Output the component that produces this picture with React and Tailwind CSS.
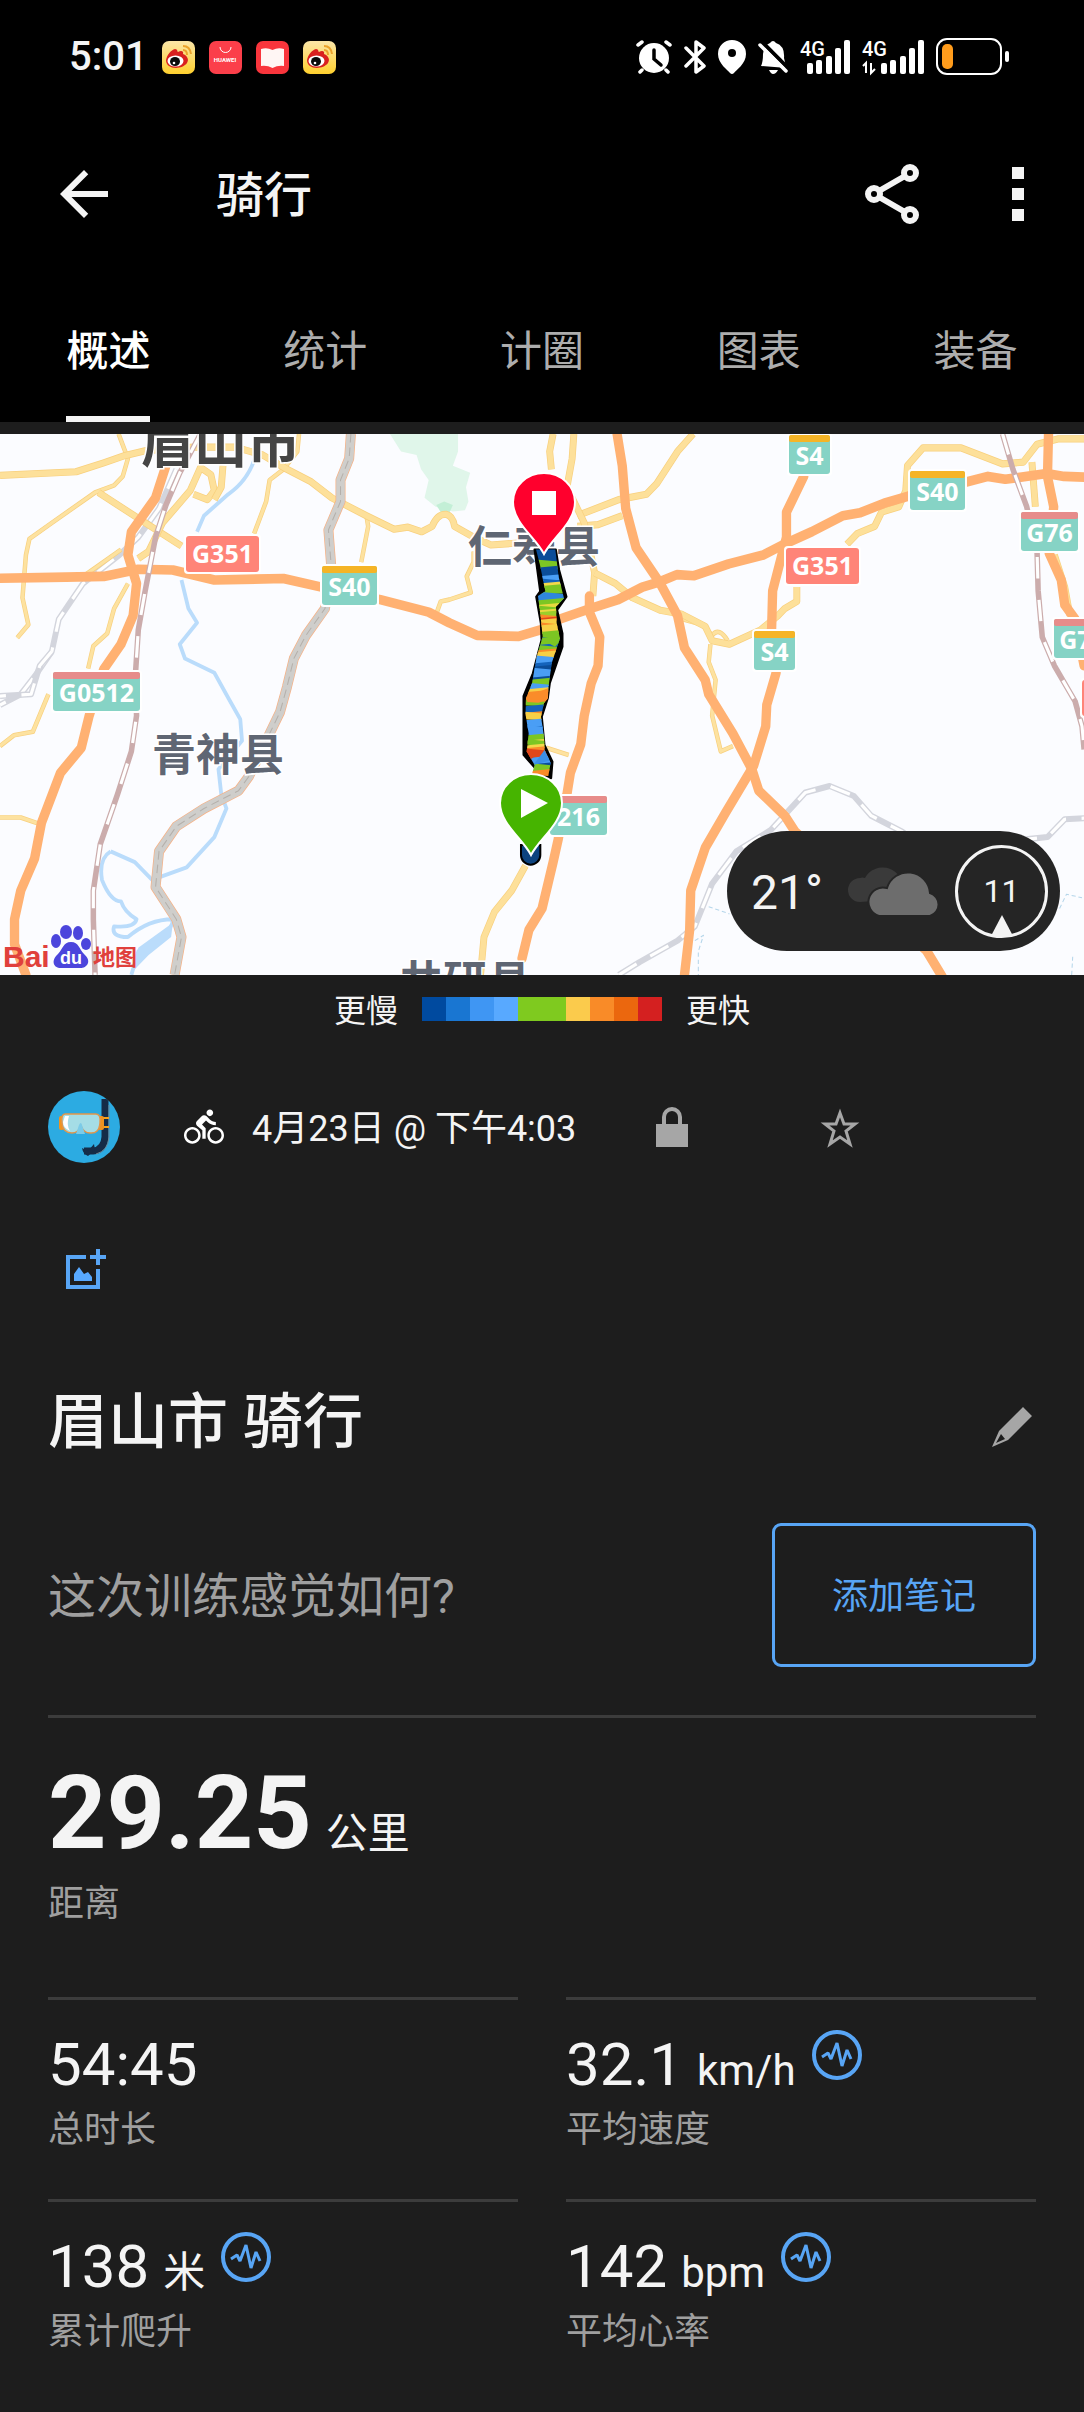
import { useState } from 'react';
import { MdDirectionsBike } from 'react-icons/md';

const tabs = ['概述', '统计', '计圈', '图表', '装备'];

const paceColors = [
  'bg-[#004a9f]',
  'bg-[#1976d2]',
  'bg-[#3f96f3]',
  'bg-[#58a9ff]',
  'bg-[#7fca1f]',
  'bg-[#7fca1f]',
  'bg-[#fbcb4c]',
  'bg-[#f98b28]',
  'bg-[#eb670e]',
  'bg-[#d42020]'
];

const stats = [
  { value: '54:45', unit: '', label: '总时长', chart: false },
  { value: '32.1', unit: 'km/h', label: '平均速度', chart: true },
  { value: '138', unit: '米', label: '累计爬升', chart: true },
  { value: '142', unit: 'bpm', label: '平均心率', chart: true }
];

const yellowRoads = [
  'M0 127L220 117L300 92L360 72L420 58L560 48L680 48L760 70L830 110L900 145L960 190L1060 240L1140 278L1180 272L1220 285L1250 270Q1265 235 1290 236Q1310 240 1315 270L1370 300L1420 322L1520 315',
  'M285 175L420 260L525 325',
  'M400 360L430 340L470 260L550 170L580 105L610 125L620 170L600 195L560 180',
  'M645 100L640 160L620 195',
  'M2005 11L1960 60L1900 150L1870 180L1790 195L1670 240',
  'M1670 270L1730 265L1800 240',
  'M1660 11L1655 80L1640 160L1690 260L1720 400L1715 465',
  'M1600 11L1590 60L1595 110',
  'M1720 400L1780 430L1830 470L1910 505L1970 515L2040 550L2060 590L2110 600L2200 560L2250 520L2270 500L2305 480L2305 440',
  'M2450 320L2480 290L2530 270L2550 230L2600 215L2620 170L2625 100L2670 50L2780 50L2900 95L2960 90L3000 40L3060 25L3136 25',
  'M2985 90L2995 215',
  'M3050 350L3080 440L3095 520',
  'M1520 1220L1480 1290L1430 1350L1400 1420L1390 1526'
];

const minorRoads = [
  'M343 11L370 80L355 130L330 155L275 175L150 260L85 305L75 350L65 470L82 545L50 582',
  'M865 11L860 60L820 110L780 140L770 200L735 290',
  'M1060 240L1065 270L1045 370',
  'M370 430L330 500L310 570L270 605L255 668',
  'M140 740L95 845L40 855L0 885',
  'M0 1085L60 1085L120 1105',
  'M1370 340L1370 370L1350 410L1362 455L1300 475L1275 480L1262 515',
  'M350 335L270 390L240 410',
  'M1975 530L2030 545L2060 575Q2080 550 2105 590',
  'M2055 600L2050 650L2070 700L2060 800L2085 900L2120 885',
  'M1580 890L1645 910'
];

const mainRoads = [
  'M0 415L190 412L300 410L400 390L500 392L620 420L820 416L930 440L1100 475L1240 510L1300 540L1380 575L1500 578L1568 558L1618 530L1708 500L1788 475L1858 440L1908 425L1958 405L2008 408L2108 375L2208 350L2268 320L2348 285L2438 240L2488 232L2558 205L2628 185L2798 145L2858 130L2908 138L3028 122L3078 130L3136 132',
  'M480 100L450 190L380 285L370 350L395 430L385 520L350 600L300 670L258 800L235 890L175 960L120 1100L100 1200L60 1290L42 1370L42 1440L75 1526',
  'M1785 11L1800 100L1810 220L1840 330L1910 430L1960 520L1980 610L2040 700L2050 740L2120 850L2175 950L2195 1010L2270 1080L2300 1125L2680 1458L2725 1530',
  'M2325 130L2275 230L2275 300L2235 450L2232 560L2245 680L2218 770L2215 830L2180 940L2100 1070L2040 1170L1998 1290L1995 1400L1980 1526',
  'M1705 465L1705 510L1735 580L1730 660L1710 710L1690 800L1680 880L1650 960L1640 1020L1615 1145L1600 1210L1568 1340L1530 1400L1510 1480',
  'M3033 11L3030 130L3048 215L3035 345L3070 420L3080 490L3110 530L3136 660'
];

const expressway =
  'M1015 11L1010 80L985 140L985 200L950 280L958 380L940 500L885 575L850 640L830 720L810 790L780 850L720 970L690 1010L590 1060L510 1110L460 1180L450 1280L510 1370L525 1420L505 1526';

const railways = [
  'M580 11L520 120L480 210L450 300L420 450L400 560L392 680L395 800L380 900L340 1020L290 1160L270 1290L270 1370L275 1526',
  'M2900 11L2930 110L2970 215L3000 345L3003 450L3015 580L3050 660L3110 760L3130 830L3136 895'
];

const plannedRailways = [
  'M510 110L460 220L400 300L345 350L240 430L170 530L150 620L100 690L60 740L0 770',
  'M150 620L115 660L90 740L0 745',
  'M1790 1526L1850 1490L1960 1430L2010 1390L2060 1270L2130 1180L2230 1120L2330 1015L2400 997L2470 1025L2520 1080L2610 1125L2700 1190',
  'M2940 1150L2980 1145L3030 1140L3080 1090L3136 1087'
];

const rivers = [
  'M740 70Q720 140 660 180L590 240L570 285',
  'M525 420L545 500L570 540L520 600L535 640L620 680L660 750L695 810L700 870L632 950L640 1020L655 1060L620 1140L540 1225L440 1260L390 1210L320 1180',
  'M320 1180Q285 1200 295 1260Q320 1320 350 1320Q360 1350 395 1370Q390 1395 330 1390Q320 1420 370 1420Q430 1370 500 1370Q500 1410 400 1460L380 1526'
];

// [start, end, colour] down the route
const routeBands = [
  [290, 332, '#0b4d99'],
  [332, 352, '#7cc623'],
  [352, 378, '#0b4d99'],
  [378, 388, '#4a9ef5'],
  [388, 400, '#1463bb'],
  [400, 408, '#f3d84a'],
  [408, 428, '#7cc623'],
  [428, 450, '#2f86dd'],
  [450, 464, '#7cc623'],
  [464, 470, '#e9d83f'],
  [470, 480, '#7cc623'],
  [480, 486, '#e9d83f'],
  [486, 496, '#9bcf2b'],
  [496, 504, '#f98b28'],
  [504, 509, '#e0471b'],
  [509, 520, '#f6cf46'],
  [520, 526, '#f98b28'],
  [526, 546, '#f6cf46'],
  [546, 564, '#7cc623'],
  [564, 568, '#1463bb'],
  [568, 584, '#7cc623'],
  [584, 588, '#1463bb'],
  [588, 600, '#7cc623'],
  [600, 606, '#f98b28'],
  [606, 620, '#f6cf46'],
  [620, 638, '#4a9ef5'],
  [638, 648, '#1463bb'],
  [648, 658, '#0b4d99'],
  [658, 680, '#4a9ef5'],
  [680, 686, '#0b4d99'],
  [686, 704, '#7cc623'],
  [704, 714, '#4a9ef5'],
  [714, 722, '#f6cf46'],
  [722, 756, '#fa8c2a'],
  [756, 764, '#7cc623'],
  [764, 784, '#1463bb'],
  [784, 792, '#f98b28'],
  [792, 806, '#f6cf46'],
  [806, 828, '#4a9ef5'],
  [828, 832, '#1463bb'],
  [832, 852, '#4a9ef5'],
  [852, 868, '#7cc623'],
  [868, 874, '#f3d84a'],
  [874, 882, '#7cc623'],
  [882, 890, '#f3d84a'],
  [890, 902, '#fa8c2a'],
  [902, 920, '#e0471b'],
  [920, 940, '#4a9ef5'],
  [940, 945, '#0b4d99'],
  [945, 960, '#7cc623'],
  [960, 990, '#f98b28']
];

const shields = [
  { x: 186, y: 102, w: 73, text: 'G351', kind: 'national' },
  { x: 322, y: 132, w: 55, text: 'S40', kind: 'provincial' },
  { x: 53, y: 238, w: 87, text: 'G0512', kind: 'express' },
  { x: 789, y: 1, w: 41, text: 'S4', kind: 'provincial' },
  { x: 910, y: 37, w: 55, text: 'S40', kind: 'provincial' },
  { x: 1021, y: 78, w: 57, text: 'G76', kind: 'express' },
  { x: 786, y: 114, w: 73, text: 'G351', kind: 'national' },
  { x: 754, y: 197, w: 41, text: 'S4', kind: 'provincial' },
  { x: 1054, y: 185, w: 57, text: 'G76', kind: 'express' },
  { x: 1082, y: 246, w: 73, text: '', kind: 'national' },
  { x: 550, y: 362, w: 57, text: '216', kind: 'express' }
];

const Shield = ({ x, y, w, text, kind }) => {
  const national = kind === 'national';
  const h = national ? 36 : 39;
  return (
    <g>
      <rect x={x - 2} y={y - 2} width={w + 4} height={h + 4} rx="4" fill="#fff" />
      <rect x={x} y={y} width={w} height={h} rx="3" fill={national ? '#ff8478' : '#86d3c5'} />
      {!national && (
        <rect x={x} y={y} width={w} height="7" rx="2" fill={kind === 'provincial' ? '#f5b426' : '#e78c8a'} />
      )}
      <text
        x={x + w / 2}
        y={national ? y + 27 : y + 30}
        textAnchor="middle"
        className="fill-white font-['Noto_Sans',sans-serif] text-[25px] font-bold"
      >
        {text}
      </text>
    </g>
  );
};

const Pin = ({ x, y, color, children }) => (
  <g transform={`translate(${x} ${y})`}>
    <path
      d="M0 81C-8 65 -31 50 -31 29A31 29 0 0 1 31 29C31 50 8 65 0 81Z"
      fill={color}
      stroke="#fff"
      strokeWidth="2"
    />
    {children}
  </g>
);

const RouteMap = () => (
  <svg
    viewBox="0 0 1084 541"
    preserveAspectRatio="xMidYMid slice"
    className="block h-[541px] w-full bg-[#fbfcff] font-['Noto_Sans_CJK_SC',sans-serif]"
    role="img"
    aria-label="路线地图"
  >
    <defs>
      <clipPath id="route">
        <path d="M288 298L300 345L316 424L294 438L302 500L308 560L290 620L276 700L258 745L256 790L266 850L260 905L284 945L275 975L325 978L332 938L314 900L312 860L303 800L312 760L324 745L325 715L335 640L360 565L350 520L348 470L372 445L356 380L346 298Z" />
      </clipPath>
    </defs>
    <g transform="translate(0 -4) scale(.3457 .3571)" fill="none" strokeLinejoin="round">
      <path d="M1128 11L1160 60L1205 70L1218 110L1240 140L1228 190L1260 215L1310 228L1345 225L1355 200L1348 160L1360 120L1310 100L1325 60V11Z" fill="#e0f6ea" />
      <path d="M1262 210L1285 200L1310 210L1300 232L1275 230Z" fill="#c3efd6" />
      {rivers.map((d) => (
        <path key={d} d={d} stroke="#badcfb" strokeWidth="11" />
      ))}
      <path d="M500 1380L400 1450L390 1510L430 1470L495 1420Z" fill="#badcfb" />
      <path d="M2050 1335L2110 1355M2010 1430L2035 1415L2020 1460L2020 1526M3100 1526L3103 1475M3065 1340L3085 1300L3130 1310" stroke="#b5d6ea" strokeWidth="3" strokeDasharray="12 8" />
      {plannedRailways.map((d) => (
        <g key={d}>
          <path d={d} stroke="#d3d5dd" strokeWidth="17" />
          <path d={d} stroke="#fff" strokeWidth="9" strokeDasharray="60 45" />
        </g>
      ))}
      {minorRoads.map((d) => (
        <g key={d}>
          <path d={d} stroke="#f8d07e" strokeWidth="13" />
          <path d={d} stroke="#fde2a0" strokeWidth="9" />
        </g>
      ))}
      {yellowRoads.map((d) => (
        <g key={d}>
          <path d={d} stroke="#f8d07e" strokeWidth="20" />
          <path d={d} stroke="#fde09a" strokeWidth="16" />
        </g>
      ))}
      {mainRoads.map((d) => (
        <path key={d} d={d} stroke="#ffb172" strokeWidth="27" strokeLinecap="round" />
      ))}
      {railways.map((d) => (
        <g key={d}>
          <path d={d} stroke="#cbacac" strokeWidth="16" />
          <path d={d} stroke="#fff" strokeWidth="9" strokeDasharray="60 60" />
        </g>
      ))}
      <path d={expressway} stroke="#f8b184" strokeWidth="29" />
      <path d={expressway} stroke="#cfcecb" strokeWidth="25" />
      <path d={expressway} stroke="#b5b0ab" strokeWidth="3" strokeDasharray="24 14" />
    </g>

    <g fill="#5f6673" stroke="#fff" strokeWidth="3" paintOrder="stroke" className="text-[44px] font-bold">
      <text x="141" y="29" fill="#454545" className="text-[53px]">眉山市</text>
      <text x="152" y="337">青神县</text>
      <text x="468" y="129">仁寿县</text>
      <text x="399" y="564">井研县</text>
    </g>

    {shields.map((s) => (
      <Shield key={`${s.x}-${s.y}`} {...s} />
    ))}

    {/* Route */}
    <g transform="translate(440 16) scale(.3333)">
      <path
        d="M283 298L300 424L288 440L302 520L304 570L278 670L250 738V915L285 955L280 985H334L338 935L314 885L306 800L324 745L330 700L368 590V550L352 480L380 440L358 360L348 298Z"
        stroke="#000"
        strokeWidth="5"
        strokeLinejoin="round"
      />
      <g clipPath="url(#route)">
        {routeBands.map(([from, to, color], i) => (
          <path
            key={from}
            d={i % 3 === 1
              ? `M240 ${from - 8}L390 ${from + 6}V${to + 8}L240 ${to + 2}Z`
              : `M240 ${from + 6}L390 ${from - 8}V${to + 2}L240 ${to + 8}Z`}
            fill={color}
          />
        ))}
        <path d="M300 565L345 562L362 572L345 590Z" fill="#7cc623" />
        <path d="M258 740L324 715L322 750L295 758L262 756Z" fill="#fa8c2a" />
        <path d="M258 895L300 905L270 930Z" fill="#e0471b" />
        <path d="M280 945L318 895L336 930Z" fill="#3b8fe6" />
      </g>
      <path d="M243 1185V1215A29 29 0 0 0 301 1215V1185Z" fill="#0d437f" stroke="#000" strokeWidth="6" />
    </g>

    <Pin x={544} y={39} color="#ff002d">
      <rect x="-12" y="18" width="24" height="24" fill="#fff" />
    </Pin>
    <Pin x={531} y={340} color="#46b400">
      <path d="M-10 15V44L17 29Z" fill="#fff" />
    </Pin>

    {/* Map provider logo */}
    <g fill="#e0403c" className="font-bold">
      <text x="3" y="533" className="font-['Liberation_Sans',sans-serif] text-[30px]">Bai</text>
      <text x="93" y="531" className="text-[22px]">地图</text>
      <g fill="#4b45dc">
        <ellipse cx="56" cy="507" rx="5" ry="7" />
        <ellipse cx="66" cy="498" rx="6" ry="7" />
        <ellipse cx="78" cy="499" rx="5" ry="7" />
        <ellipse cx="86" cy="510" rx="5" ry="6" />
        <path d="M71 508C79 508 79 515 84 520C93 528 86 535 79 534H62C54 535 50 527 58 520C63 515 63 508 71 508Z" />
      </g>
      <text x="60" y="530" fill="#fff" className="font-['Liberation_Sans',sans-serif] text-[18px]">du</text>
    </g>
  </svg>
);

const WeatherBadge = () => (
  <div className="absolute right-6 bottom-6 flex h-[120px] items-center rounded-full bg-[#252525] pr-3 pl-6 text-[#f4f4f4]">
    <span className="w-24 pt-1 text-5xl">21°</span>
    <svg viewBox="0 0 96 50" className="h-[50px] w-[96px]">
      <path d="M13 36A12 12 0 0 1 13 12Q15 11 18 12A20 20 0 0 1 52 10L40 34Z" fill="#3a3a3a" />
      <path d="M32 50A14 14 0 1 1 40 22A22 22 0 0 1 83 27A12 12 0 0 1 83 50Z" fill="#6d6d6d" stroke="#252525" strokeWidth="2" />
    </svg>
    <div className="relative ml-3 flex size-[93px] items-center justify-center rounded-full border-[3px] border-[#f4f4f4] text-[32px]">
      11
      <svg viewBox="0 0 22 22" className="absolute -bottom-[2px] size-[22px]">
        <path d="M11 0L22 21Q11 23 0 21Z" fill="#f4f4f4" />
      </svg>
    </div>
  </div>
);

const WeiboIcon = () => (
  <svg viewBox="0 0 33 33" className="size-[33px]">
    <defs>
      <linearGradient id="weibo" x2="0" y2="1">
        <stop stopColor="#fbe6a8" />
        <stop offset="1" stopColor="#ffd02e" />
      </linearGradient>
    </defs>
    <rect width="33" height="33" rx="7" fill="url(#weibo)" />
    <path d="M4 19C5 14 9 9 13 8C16 8 15 11 16 11C19 9 22 10 21 13C26 15 27 19 25 22C20 29 4 29 4 19Z" fill="#d9201f" />
    <ellipse cx="13.5" cy="20" rx="8" ry="5.5" fill="#fff" />
    <ellipse cx="13" cy="20.5" rx="5" ry="4.5" fill="#0a0a0a" />
    <circle cx="12" cy="22" r="1.3" fill="#fff" />
    <path d="M21 5Q28 5 29 13M21 9Q25 9 25 14" fill="none" stroke="#eba22c" strokeWidth="2" />
  </svg>
);

const StoreIcon = () => (
  <svg viewBox="0 0 33 33" className="size-[33px]">
    <rect width="33" height="33" rx="7" fill="#fb3f4a" />
    <path d="M11 6A5 5 0 0 0 22 6" fill="none" stroke="#fff" strokeWidth="1" />
    <text x="16" y="21" textAnchor="middle" fill="#fff" className="font-['Roboto',sans-serif] text-[6px] font-bold">HUAWEI</text>
  </svg>
);

const ReaderIcon = () => (
  <svg viewBox="0 0 33 33" className="size-[33px]">
    <rect width="33" height="33" rx="7" fill="#f9353c" />
    <path d="M5 8Q11 6 16.5 9Q22 6 28 8V25Q22 24 16.5 27Q11 24 5 25Z" fill="#fff6f4" />
  </svg>
);

const Signal = ({ data }) => (
  <svg
    viewBox={data ? '0 0 62 36' : '0 0 50 36'}
    className={data ? 'h-9 w-[62px] overflow-visible' : 'h-9 w-[50px] overflow-visible'}
    fill="#fff"
  >
    <text x="0" y="17" className="font-['Roboto',sans-serif] text-[20px] font-medium">4G</text>
    {data && (
      <path d="M1 27L4 24V34M9 24V34L13 30" fill="none" stroke="#fff" strokeWidth="2" />
    )}
    <g transform={data ? 'translate(12 0)' : undefined}>
      <rect x="7" y="24" width="6" height="11" rx="2" />
      <rect x="16" y="21" width="6" height="14" rx="2" />
      <rect x="26" y="17" width="6" height="18" rx="2" />
      <rect x="35" y="9" width="6" height="26" rx="2" />
      <rect x="44" y="1" width="6" height="34" rx="2" />
    </g>
  </svg>
);

const StatusBar = () => (
  <div className="flex h-[114px] items-center justify-between pr-[74px] pl-[69px]">
    <div className="flex items-center gap-[14px]">
      <span className="text-[40px] leading-none font-medium">5:01</span>
      <WeiboIcon />
      <StoreIcon />
      <ReaderIcon />
      <WeiboIcon />
    </div>
    <div className="flex items-center gap-3">
      <svg viewBox="0 0 36 34" className="h-[34px] w-9" fill="none" stroke="#fff" strokeLinecap="round">
        <circle cx="18" cy="18" r="15" fill="#fff" stroke="none" />
        <path d="M2 5L6 2M34 5L30 2M6 30L4 32M30 30L32 32" strokeWidth="3.5" />
        <path d="M18 10V19L25 25" stroke="#000" strokeWidth="3.5" />
      </svg>
      <svg viewBox="0 0 22 34" className="h-[34px] w-[22px]" fill="none" stroke="#fff" strokeWidth="3.5" strokeLinecap="round" strokeLinejoin="round">
        <path d="M2 8L20 26L12 32V2L20 8L2 26" />
      </svg>
      <svg viewBox="0 0 28 34" className="h-[34px] w-7">
        <path d="M14 0A14 14 0 0 0 0 14C0 24 10 30 12 33Q14 35 16 33C18 30 28 24 28 14A14 14 0 0 0 14 0Z" fill="#fff" />
        <circle cx="14" cy="13" r="4" fill="#000" />
      </svg>
      <svg viewBox="0 0 30 34" className="h-[34px] w-[30px]">
        <path d="M3 26Q5 22 5 14Q6 5 12 3Q15 -1 18 3Q27 6 26 18Q27 24 29 28Z" fill="#fff" />
        <path d="M11 30H20Q18 34 15 34Q13 34 11 30Z" fill="#fff" />
        <path d="M4 2L31 29" stroke="#000" strokeWidth="4" />
        <path d="M2 5L28 31" stroke="#fff" strokeWidth="3.5" strokeLinecap="round" />
      </svg>
      <Signal />
      <Signal data />
      <svg viewBox="0 0 74 38" className="h-[38px] w-[74px]">
        <rect x="1" y="1" width="64" height="35" rx="10" fill="none" stroke="#fff" strokeWidth="2" />
        <rect x="6" y="6" width="11" height="25" rx="5" fill="#ff9c1c" />
        <rect x="69" y="13" width="4" height="11" rx="2" fill="#fff" />
      </svg>
    </div>
  </div>
);

const ChartButton = ({ label }) => (
  <button type="button" aria-label={label} className="ml-4 block">
    <svg viewBox="0 0 50 50" className="size-[50px]" fill="none" stroke="#58a5f5">
      <circle cx="25" cy="25" r="23" strokeWidth="4" />
      <path d="M10 27L16 23L19 29L25 13L30 36L35 20L39 29" strokeWidth="3" strokeLinejoin="bevel" />
    </svg>
  </button>
);

const Avatar = () => (
  <svg viewBox="0 0 72 72" className="size-[72px]">
    <defs>
      <clipPath id="avatar">
        <circle cx="36" cy="36" r="36" />
      </clipPath>
    </defs>
    <g clipPath="url(#avatar)">
      <rect width="72" height="72" fill="#2cabe2" />
      <path d="M57 8V46Q56 59 45 60H36" fill="none" stroke="#152c48" strokeWidth="7" />
      <path d="M34 57L40 60L46 53L47 59L40 65Q35 63 34 57Z" fill="#152c48" />
      <path d="M61 14V46Q60 60 48 63" fill="none" stroke="#6d8797" strokeWidth="1" />
      <path d="M52 27H61M52 36H61" stroke="#f5a11c" strokeWidth="2" />
      <rect x="11" y="25" width="5" height="14" rx="2" fill="#ef9320" />
      <rect x="50" y="25" width="6" height="14" rx="2" fill="#ef9320" />
      <path d="M17 23H48Q53 23 52 32Q51 43 42 42Q36 42 33 35Q30 42 24 42Q15 42 14 32Q13 23 17 23Z" fill="#a5dde6" stroke="#e2964a" strokeWidth="1.5" />
      <path d="M17 25H21Q18 34 22 40Q15 37 15 31Z" fill="#fff" />
      <path d="M31 34Q33 30 34 34L37 43H28Z" fill="#7ccbe8" />
    </g>
  </svg>
);

const App = () => {
  const [activeTab, setActiveTab] = useState(0);

  return (
    <div className="min-h-screen bg-[#1d1d1d] font-['Roboto','Noto_Sans_CJK_SC',sans-serif] text-[#f4f4f4]">
      <header className="bg-black">
        <StatusBar />

        <div className="flex h-40 items-center pr-[30px] pl-12">
          <button type="button" aria-label="返回">
            <svg viewBox="0 0 24 24" className="size-[72px]" fill="currentColor">
              <path d="M20 11H7.830l5.590-5.590L12 4l-8 8 8 8 1.410-1.410L7.830 13H20v-2z" />
            </svg>
          </button>
          <h1 className="ml-24 flex-1 pt-1 text-5xl leading-none font-medium">骑行</h1>
          <button type="button" aria-label="分享">
            <svg viewBox="0 0 72 72" className="size-[72px]" fill="none" stroke="currentColor" strokeWidth="6">
              <circle cx="54" cy="15" r="6" />
              <circle cx="18" cy="36" r="6" />
              <circle cx="54" cy="57" r="6" />
              <path d="M23 33L49 18M23 39L49 54" />
            </svg>
          </button>
          <button type="button" aria-label="更多" className="ml-[54px]">
            <svg viewBox="0 0 72 72" className="size-[72px]" fill="currentColor">
              <path d="M30 9h12v12H30zM30 30h12v12H30zM30 51h12v12H30z" />
            </svg>
          </button>
        </div>

        <nav className="grid grid-cols-5">
          {tabs.map((tab, index) => (
            <button
              key={tab}
              type="button"
              onClick={() => setActiveTab(index)}
              className={`mx-auto flex h-[148px] items-center border-b-[6px] pt-3 text-[42px] ${
                index === activeTab
                  ? 'border-b-[#f4f4f4] font-medium text-white'
                  : 'border-b-transparent text-[#adadad]'
              }`}
            >
              {tab}
            </button>
          ))}
        </nav>
      </header>

      <div className="relative mt-3">
        <RouteMap />
        <WeatherBadge />
      </div>

      {/* Pace legend */}
      <div className="flex h-[68px] items-center justify-center gap-6 text-[32px] leading-none">
        <span className="pt-1">更慢</span>
        <div className="flex">
          {paceColors.map((color, index) => (
            <div key={index} className={`size-6 ${color}`} />
          ))}
        </div>
        <span className="pt-1">更快</span>
      </div>

      <main className="px-12">
        <div className="flex h-[168px] items-center">
          <Avatar />
          <MdDirectionsBike className="ml-16 size-10 text-white" />
          <time className="ml-7 pt-1 text-4xl leading-none">4月23日 @ 下午4:03</time>
          <button type="button" aria-label="隐私" className="ml-[72px]">
            <svg viewBox="0 0 48 48" className="size-12" fill="none" stroke="#a6a6a6">
              <path d="M8 21H40V44H8Z" fill="#a6a6a6" stroke="none" />
              <path d="M16 22V14A8 8 0 0 1 32 14V22" strokeWidth="4" />
            </svg>
          </button>
          <button type="button" aria-label="收藏" className="ml-[120px]">
            <svg viewBox="0 0 48 48" className="size-12" fill="none" stroke="#a6a6a6" strokeWidth="3">
              <path d="M24 10L28 21L39 21L30 28L34 41L24 34L14 41L18 28L9 21L20 21Z" />
            </svg>
          </button>
        </div>

        <div className="flex h-[116px] items-center pl-[18px]">
          <button type="button" aria-label="添加照片">
            <svg viewBox="0 0 40 40" className="size-10" fill="none" stroke="#58a5f5" strokeWidth="4">
              <path d="M20 8H2V38H32V20M32 0V16M24 8H40" />
              <path d="M8 32V25L13 18L18 25L22 23L26 28V32Z" fill="#58a9ff" stroke="none" />
            </svg>
          </button>
        </div>

        <div className="flex h-[188px] items-center justify-between pt-1">
          <h2 className="text-6xl leading-none font-medium">眉山市 骑行</h2>
          <button type="button" aria-label="编辑" className="pt-2">
            <svg viewBox="0 0 48 48" className="size-12" fill="#a6a6a6">
              <path d="M35 4L44 13L20 37L4 44L11 28ZM13 31L8 40L17 36Z" fillRule="evenodd" />
            </svg>
          </button>
        </div>

        <div className="mb-10 flex h-40 items-center justify-between">
          <p className="pt-1 text-5xl leading-none text-[#9f9f9f]">这次训练感觉如何?</p>
          <button type="button" className="h-36 w-[264px] rounded-[9px] border-[3px] border-[#58a5f5] pt-1 text-4xl text-[#58a5f5]">
            添加笔记
          </button>
        </div>

        <section className="border-t-[3px] border-[#3c3c3c] pt-11 pb-[75px]">
          <div className="flex items-baseline gap-[14px] leading-none">
            <span className="text-[102px] leading-none font-bold">29.25</span>
            <span className="text-[42px] leading-none">公里</span>
          </div>
          <p className="mt-[22px] text-4xl leading-none text-[#9f9f9f]">距离</p>
        </section>

        <section className="grid grid-cols-2 gap-x-12">
          {stats.map((stat) => (
            <div key={stat.label} className="border-t-[3px] border-[#3c3c3c] pt-[30px] pb-[51px]">
              <div className="flex items-start">
                <div className="flex items-baseline gap-[14px] pt-[5px]">
                  <span className="text-6xl leading-none">{stat.value}</span>
                  {stat.unit && <span className="text-[42px] leading-none">{stat.unit}</span>}
                </div>
                {stat.chart && <ChartButton label={stat.label} />}
              </div>
              <p className="mt-[17px] text-4xl leading-none text-[#9f9f9f]">{stat.label}</p>
            </div>
          ))}
        </section>
      </main>
    </div>
  );
};

export default App;
